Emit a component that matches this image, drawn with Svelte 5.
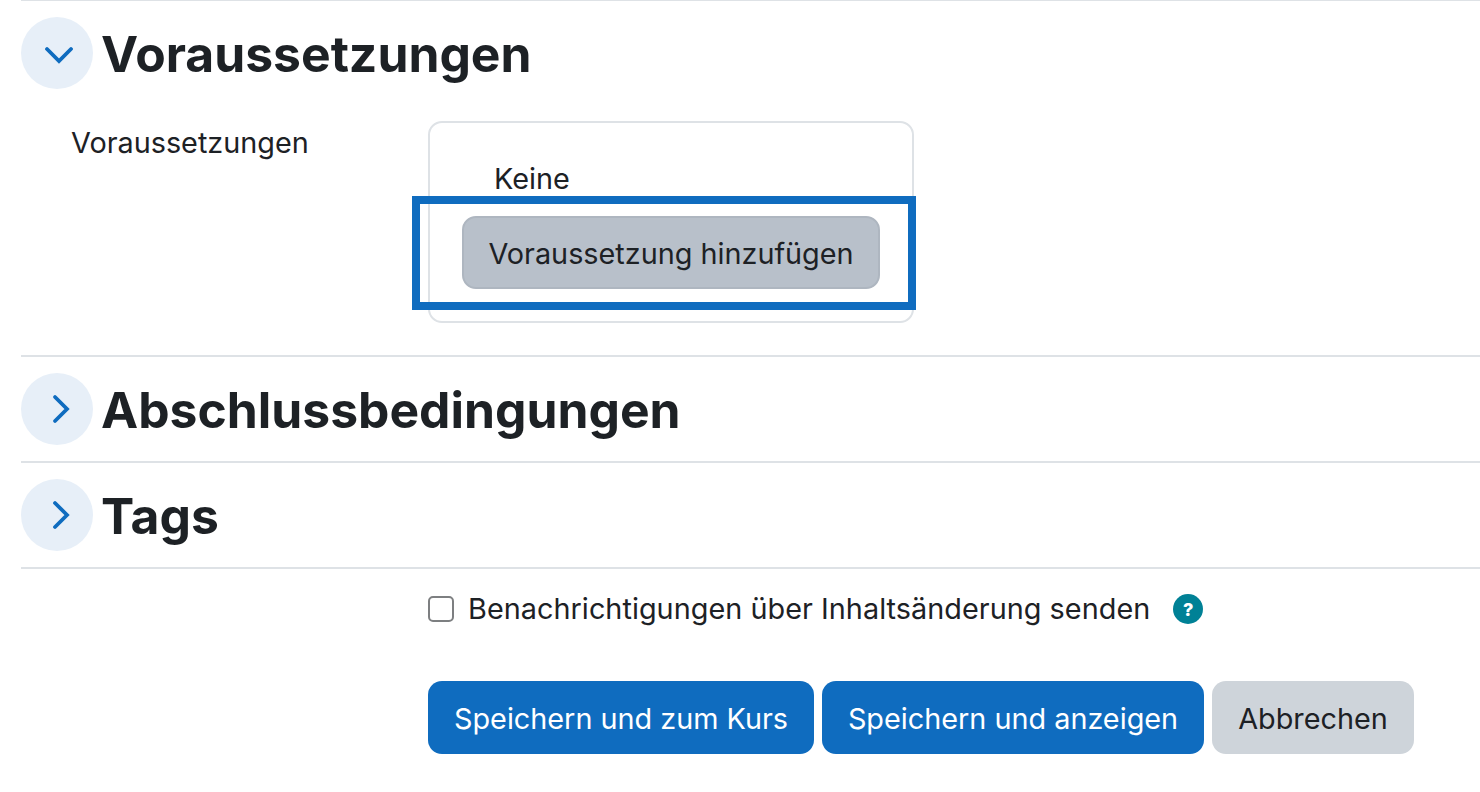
<script>
	const sections = [
		{ title: 'Voraussetzungen', open: true },
		{ title: 'Abschlussbedingungen', open: false },
		{ title: 'Tags', open: false }
	]
</script>

<div class="page">
	{#each sections as section}
		<section>
			<div class="head">
				<span class="toggle">
					<svg viewBox="0 0 32 32" width="32" height="32" aria-hidden="true">
						{#if section.open}
							<path d="M6 12 L18 24 L30 12" />
						{:else}
							<path d="M14 4 L26 16 L14 28" />
						{/if}
					</svg>
				</span>
				<h3>{section.title}</h3>
			</div>
			{#if section.open}
				<div class="row">
					<div class="label">Voraussetzungen</div>
					<div class="box">
						<div class="none">Keine</div>
						<div class="add-wrap">
							<button class="btn add">Voraussetzung hinzufügen</button>
							<div class="highlight"></div>
						</div>
					</div>
				</div>
			{/if}
		</section>
	{/each}

	<div class="footer">
		<div class="notify">
			<span class="check"></span>
			<span class="notify-text">Benachrichtigungen über Inhaltsänderung senden</span>
			<span class="help">?</span>
		</div>
		<div class="actions">
			<button class="btn primary first">Speichern und zum Kurs</button>
			<button class="btn primary second">Speichern und anzeigen</button>
			<button class="btn cancel">Abbrechen</button>
		</div>
	</div>
</div>

<style>
	:global(body) {
		background: #fff;
		font-family: Inter, "Liberation Sans", sans-serif;
		color: #1d2125;
		overflow: hidden;
	}
	.page {
		margin-top: -1px;
		padding-left: 21px;
		font-size: 28.8px;
	}
	section {
		border-top: 2px solid #dee2e6;
		padding-bottom: 16px;
	}
	.head {
		display: flex;
		align-items: center;
		gap: 8px;
		padding-top: 16px;
	}
	.toggle {
		display: flex;
		align-items: center;
		justify-content: center;
		flex: none;
		width: 72px;
		height: 72px;
		border-radius: 50%;
		background: #e7eff8;
	}
	svg path {
		fill: none;
		stroke: #0f6cbf;
		stroke-width: 3.8;
		stroke-linecap: round;
		stroke-linejoin: miter;
	}
	h3 {
		margin: 0;
		font-size: 49.8px;
		font-weight: 700;
		line-height: 69px;
		padding-top: 3px;
	}
	.row {
		display: flex;
		padding: 32px 0 16px;
	}
	.label {
		width: 407px;
		padding-left: 50px;
		padding-top: 2px;
		line-height: 40px;
		box-sizing: border-box;
		flex: none;
	}
	.box {
		width: 486px;
		height: 202px;
		box-sizing: border-box;
		border: 2px solid #dee2e6;
		border-radius: 14px;
		padding: 36px 32px 0;
	}
	.none {
		padding-left: 32px;
		line-height: 40px;
	}
	.add-wrap {
		position: relative;
		margin-top: 17px;
	}
	.btn {
		display: block;
		box-sizing: border-box;
		height: 73px;
		border: 2px solid transparent;
		border-radius: 14px;
		font: inherit;
		font-size: 28.8px;
		padding: 2px 0 0;
	}
	.add {
		width: 418px;
		background: #b8c0ca;
		border-color: #aeb6c0;
		color: #1d2125;
	}
	.highlight {
		position: absolute;
		left: -50px;
		top: -20px;
		width: 504px;
		height: 114px;
		box-sizing: border-box;
		border: 8px solid #0f6cbf;
	}
	.footer {
		padding-left: 407px;
		border-top: 2px solid #dee2e6;
		padding-top: 25px;
	}
	.notify {
		display: flex;
		align-items: center;
		height: 30px;
	}
	.notify-text {
		padding-bottom: 2px;
		letter-spacing: 0.04px;
	}
	.check {
		flex: none;
		width: 26px;
		height: 26px;
		box-sizing: border-box;
		border: 2px solid #7d7f81;
		border-radius: 5px;
		margin-right: 14px;
	}
	.help {
		display: flex;
		align-items: center;
		justify-content: center;
		flex: none;
		width: 30px;
		height: 30px;
		margin-left: 23px;
		border-radius: 50%;
		background: #008196;
		color: #fff;
		font-size: 18px;
		font-weight: 800;
	}
	.actions {
		display: flex;
		gap: 8px;
		margin-top: 57px;
	}
	.primary {
		background: #0f6cbf;
		color: #fff;
	}
	.first {
		width: 386px;
	}
	.second {
		width: 382px;
	}
	.cancel {
		width: 202px;
		background: #ced4da;
		color: #1d2125;
	}
</style>
